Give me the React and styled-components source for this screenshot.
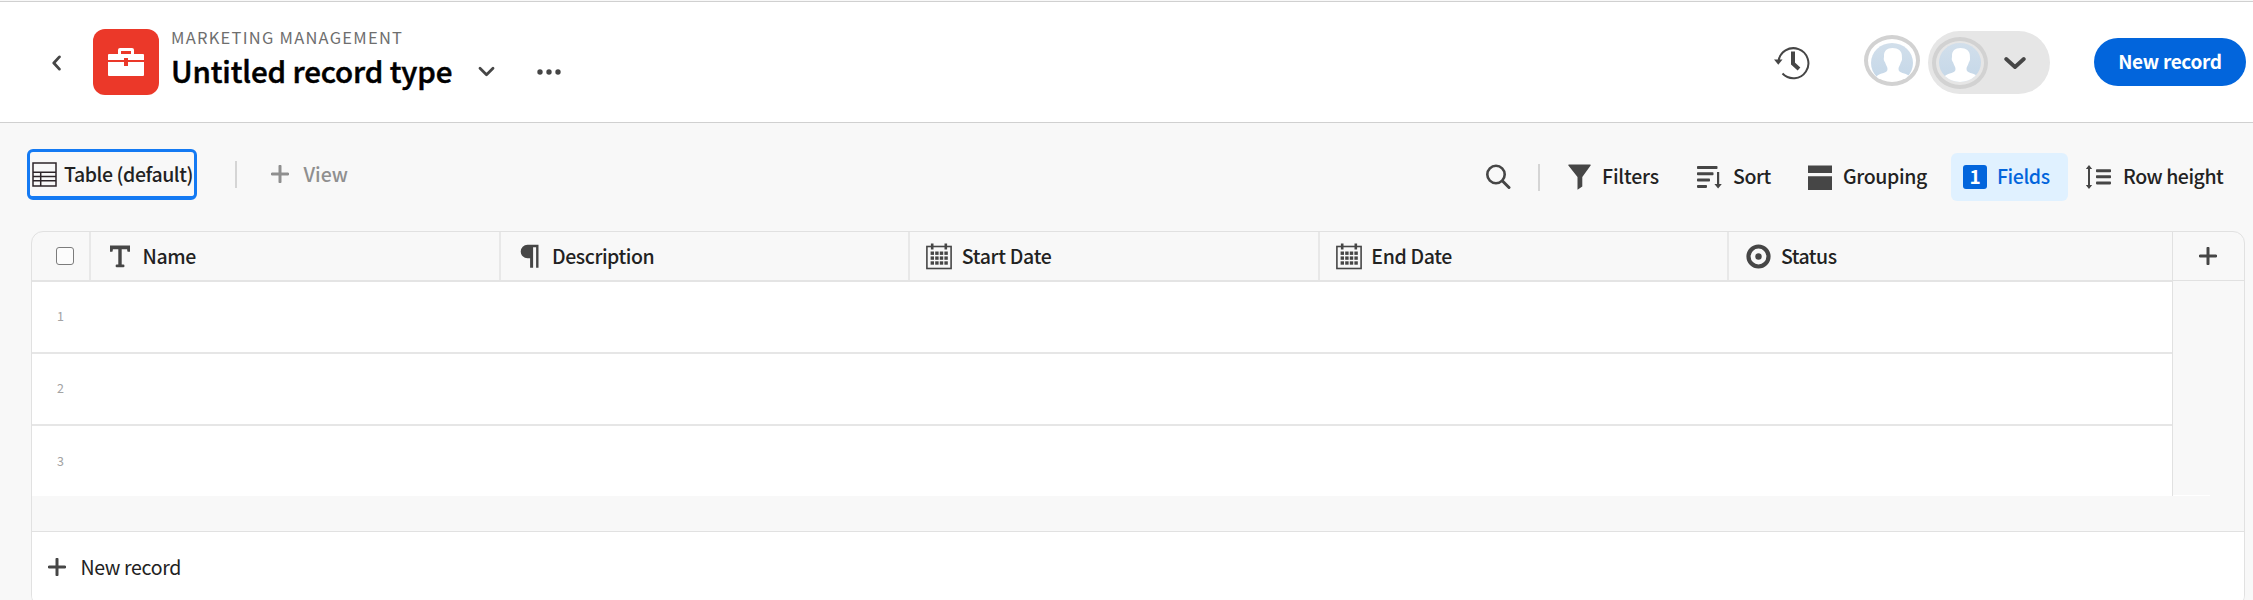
import React from "react";
import styled, { createGlobalStyle } from "styled-components";

const GlobalStyle = createGlobalStyle`
  *, *::before, *::after { box-sizing: border-box; }
  body {
    margin: 0;
    overflow: hidden;
    background: #f8f8f8;
    color: #222;
    font-family: "Noto Sans CJK SC", "Noto Sans", sans-serif;
    font-size: 19.5px;
  }
  button { font: inherit; color: inherit; background: none; border: 0; padding: 0; margin: 0; }
  svg { display: block; flex: none; }
`;

const Page = styled.div`
  width: 2253px;
  height: 600px;
  overflow: hidden;
  padding-top: 1px;
`;

const Text = styled.span`
  display: block;
  white-space: nowrap;
  font-size: ${(p) => p.$size || 19.5}px;
  line-height: ${(p) => p.$line || 24}px;
  font-weight: ${(p) => p.$weight || 500};
  letter-spacing: ${(p) => (p.$track === undefined ? -0.28 : p.$track)}px;
  color: ${(p) => p.$color || "#222"};
`;

/* Header */
const Header = styled.header`
  display: flex;
  align-items: flex-start;
  height: 122px;
  padding: 0 7px 0 51px;
  background: #fff;
  border-top: 1px solid #d0d0d0;
  border-bottom: 1px solid #d0d0d0;
`;

const BackButton = styled.button`
  margin: 53px 31px 0 0;
`;

const RecordBadge = styled.div`
  display: flex;
  align-items: center;
  justify-content: center;
  width: 66px;
  height: 66px;
  margin: 27px 12px 0 0;
  border-radius: 12px;
  background: #eb3829;
`;

const Titles = styled.div`
  display: flex;
  flex-direction: column;
  padding-top: 23px;
`;

const TitleRow = styled.div`
  display: flex;
  align-items: center;
  height: 42px;
`;

const Title = styled(Text)`
  -webkit-text-stroke: 0.5px #000;
`;

const Chevron = styled.button`
  margin: 3px 0 0 26px;
`;

const More = styled.button`
  margin: 3px 0 0 41px;
`;

const HeaderActions = styled.div`
  display: flex;
  align-items: center;
  height: 63px;
  margin: 29px 0 0 auto;
`;

const HistoryButton = styled.button`
  margin-right: 53px;
`;

const Avatar = styled.span`
  display: flex;
  flex: none;
  align-items: center;
  justify-content: center;
  width: 56px;
  height: 52px;
  border: 4px solid #d2d2d2;
  border-radius: 50%;
`;

const ViewerAvatar = styled(Avatar)`
  height: 51px;
  margin: 0 8px 4px 0;
`;

const UserPill = styled.button`
  display: flex;
  align-items: center;
  gap: 16px;
  width: 122px;
  height: 63px;
  margin-right: 44px;
  padding-left: 4px;
  border-radius: 32px;
  background: #e6e6e6;
`;

const PrimaryButton = styled.button`
  display: flex;
  align-items: center;
  justify-content: center;
  width: 152px;
  height: 48px;
  margin-bottom: 1px;
  padding-bottom: 3px;
  border-radius: 24px;
  background: #0265dc;
`;

/* Toolbar */
const Toolbar = styled.div`
  display: flex;
  align-items: flex-start;
  height: 108px;
  padding: 26px 22px 0 27px;
`;

const ViewTab = styled.button`
  display: flex;
  align-items: center;
  gap: 7px;
  width: 170px;
  height: 51px;
  padding: 0 0 0 2px;
  border: 3px solid #147af3;
  border-bottom-width: 4px;
  border-radius: 6px;
`;

const Separator = styled.span`
  flex: none;
  width: 2px;
  height: 27px;
  background: #d5d5d5;
  margin: ${(p) => p.$margin};
`;

const AddView = styled.button`
  display: flex;
  align-items: center;
  gap: 14.5px;
  height: 24px;
  margin-top: 13px;
`;

const Tools = styled.div`
  display: flex;
  align-items: center;
  height: 48px;
  margin: 4px 0 0 auto;
`;

const Tool = styled.button`
  display: flex;
  align-items: center;
  flex: none;
  gap: ${(p) => p.$gap || 11}px;
  width: ${(p) => p.$width}px;
  height: 48px;
  & > ${Text} {
    margin-bottom: 2px;
  }
`;

const ActiveTool = styled(Tool)`
  padding-left: 12px;
  margin-right: 18px;
  border-radius: 6px;
  background: #e0f1ff;
`;

const Count = styled.span`
  display: flex;
  justify-content: center;
  width: 24px;
  height: 24px;
  border-radius: 3px;
  background: #0265dc;
`;

/* Table */
const Table = styled.div`
  width: 2214px;
  height: 376px;
  margin-left: 31px;
  overflow: hidden;
  border: 1px solid #e1e1e1;
  border-radius: 12px;
`;

const TableBody = styled.div`
  display: flex;
  height: 264px;
`;

const Columns = styled.div`
  flex: 1;
`;

const HeadRow = styled.div`
  display: grid;
  grid-template-columns: 59px 409.6px 409.6px 409.6px 409.6px 1fr;
  height: 50px;
  border-bottom: 2px solid #e4e4e4;
`;

const HeadCell = styled.div`
  display: flex;
  align-items: center;
  gap: 9.5px;
  padding-left: 16px;
  border-right: ${(p) => (p.$last ? "0" : "2px solid #e8e8e8")};
`;

const IconSlot = styled.span`
  display: flex;
  justify-content: center;
  align-items: center;
  width: 26px;
  height: 26px;
`;

const CheckCell = styled(HeadCell)`
  padding-left: 24px;
`;

const Checkbox = styled.span`
  width: 18px;
  height: 18px;
  border: 1px solid #7c7c7c;
  border-radius: 3px;
  background: #fcfcfc;
`;

const Row = styled.div`
  display: flex;
  align-items: center;
  height: ${(p) => (p.$last ? 70 : 72)}px;
  padding: ${(p) => (p.$last ? "0 0 0 25px" : "0 0 2px 25px")};
  background: #fff;
  border-bottom: ${(p) => (p.$last ? "0" : "2px solid #e6e6e6")};
`;

const AddColumn = styled.div`
  width: 72px;
  border-left: 1px solid #e1e1e1;
  &::after {
    content: "";
    display: block;
    width: 37px;
    height: 1px;
    margin-top: 214px;
    background: #fff;
  }
`;

const AddColumnButton = styled.button`
  display: flex;
  align-items: center;
  justify-content: center;
  width: 100%;
  height: 49px;
  padding-right: 1px;
  border-bottom: 1px solid #e1e1e1;
`;

const Spacer = styled.div`
  height: 35px;
`;

const Footer = styled.div`
  display: flex;
  align-items: flex-start;
  gap: 14.5px;
  height: 75px;
  padding: 23px 0 0 16px;
  background: #fff;
  border-top: 1px solid #e1e1e1;
  & > svg {
    margin-top: 3px;
  }
`;

const ink = "#464646";

const Plus = ({ color = ink }) => (
  <svg width="18" height="18" viewBox="0 0 18 18" stroke={color} strokeWidth="3" strokeLinecap="round">
    <path d="M9 1.2v15.6M1.2 9h15.6" />
  </svg>
);

const Person = ({ id, tall }) => (
  <svg width="42" height={tall ? 39 : 36} viewBox={tall ? "0 0 42 39" : "0 0 42 36"}>
    <defs>
      <clipPath id={id}>
        <ellipse cx="21" cy={tall ? 19.5 : 20} rx="21" ry={tall ? 19.5 : 20} />
      </clipPath>
      <linearGradient id={id + "g"} x1="0" y1="0" x2="0" y2="1">
        <stop offset="0" stopColor="#d2dfeb" />
        <stop offset="1" stopColor="#c4d7e8" />
      </linearGradient>
    </defs>
    <g clipPath={`url(#${id})`}>
      <rect width="42" height="39" fill={`url(#${id}g)`} />
      <path
        fill="#fff"
        d="M21.5 5c-5.800 0-8.700 3.200-8.500 8 .1 1.500-.4 2.200-.2 3.600.3 1.900 1.400 2.500 1.800 4.200.5 1.900 1.900 2.800 1.900 5.200 0 2.300-1.300 3.200-4 4-3.700 1.100-6.500 2-8 4.500V41h35v-6.500c-1.500-2.500-4.300-3.400-8-4.500-2.500-.8-4-1.700-4-4 0-2.400 1.400-3.300 1.900-5.200.4-1.700 1.300-2.300 1.600-4.200.2-1.400-.2-2.100-.1-3.600.2-4.800-3.600-8-9.400-8z"
      />
    </g>
  </svg>
);

const TextIcon = () => (
  <svg width="22" height="23" viewBox="0 0 22 23" fill={ink}>
    <path d="M1 .5h20v6.200h-2.200q-.5 0-.7-2.500h-5.400v15.300h1.600q1.200 0 1.200 1.400t-1.200 1.400H7.800q-1.200 0-1.200-1.400t1.200-1.400h1.500V4.200H3.900q-.2 2.500-.7 2.500H1z" />
  </svg>
);

const ParagraphIcon = () => (
  <svg width="20" height="24" viewBox="0 0 20 24" fill={ink}>
    <path d="M7.500.7h11v23h-2.400V3.200h-3v20.500h-3V14.300H7.500A6.800 6.800 0 0 1 7.500.7z" />
  </svg>
);

const CalendarIcon = () => (
  <svg width="26" height="28" viewBox="0 0 26 28">
    <rect x=".9" y="4.500" width="24.200" height="22" fill="none" stroke={ink} strokeWidth="1.6" />
    <path d="M6.200 1.500v6M19.800 1.500v6" stroke={ink} strokeWidth="2.600" />
    {[0, 1, 2].map((r) =>
      [0, 1, 2, 3].map((c) => (
        <rect key={`${r}-${c}`} x={4.6 + c * 4.6} y={9.5 + r * 4.900} width="3.400" height="3.400" fill={ink} />
      ))
    )}
  </svg>
);

const StatusIcon = () => (
  <svg width="25" height="25" viewBox="0 0 25 25">
    <circle cx="12.500" cy="12.500" r="10" fill="none" stroke={ink} strokeWidth="4.200" />
    <circle cx="12.500" cy="12.500" r="3.200" fill={ink} />
  </svg>
);

const fields = [
  { name: "Name", Icon: TextIcon, track: -0.4 },
  { name: "Description", Icon: ParagraphIcon, track: -0.45 },
  { name: "Start Date", Icon: CalendarIcon, track: -0.3 },
  { name: "End Date", Icon: CalendarIcon, track: -0.35 },
  { name: "Status", Icon: StatusIcon, track: -0.5 },
];

export default function App() {
  return (
    <Page>
      <GlobalStyle />
      <Header>
        <BackButton aria-label="Back">
          <svg width="11" height="16" viewBox="0 0 11 16" fill="none" stroke={ink} strokeWidth="2.800" strokeLinecap="round" strokeLinejoin="round">
            <path d="M8.400 1.900 2.800 8l5.600 6.100" />
          </svg>
        </BackButton>
        <RecordBadge>
          <svg width="36" height="28" viewBox="0 0 36 28" fill="#fff">
            <path d="M10 6V2q0-2 2-2h12q2 0 2 2v4h9q1 0 1 1v5H20v-2h-4v2H0V7q0-1 1-1zm3 0h10V3H13z" fillRule="evenodd" />
            <path d="M0 14h16v4h4v-4h16v13q0 1-1 1H1q-1 0-1-1z" />
          </svg>
        </RecordBadge>
        <Titles>
          <Text $size={16.5} $weight={400} $track={1.25} $color="#6e6e6e">MARKETING MANAGEMENT</Text>
          <TitleRow>
            <Title $size={29.5} $line={42} $weight={500} $track={-0.12} $color="#000">Untitled record type</Title>
            <Chevron aria-label="Open menu">
              <svg width="17" height="11" viewBox="0 0 17 11" fill="none" stroke={ink} strokeWidth="2.800" strokeLinecap="round" strokeLinejoin="round">
                <path d="M2 2.200 8.500 8.700 15 2.200" />
              </svg>
            </Chevron>
            <More aria-label="More">
              <svg width="26" height="8" viewBox="0 0 26 8" fill={ink}>
                <circle cx="4" cy="4" r="2.700" />
                <circle cx="13" cy="4" r="2.700" />
                <circle cx="22" cy="4" r="2.700" />
              </svg>
            </More>
          </TitleRow>
        </Titles>
        <HeaderActions>
          <HistoryButton aria-label="History">
            <svg width="38" height="34" viewBox="0 0 38 34" fill="none" stroke={ink}>
              <path d="M5.500 15.500A15 15 0 1 1 9.500 27.500" strokeWidth="2" />
              <path d="M1 13.500h8.500L5.300 18.700z" fill={ink} stroke="none" />
              <path d="M20 5.500v12l6 5.500" strokeWidth="4" />
            </svg>
          </HistoryButton>
          <ViewerAvatar><Person id="viewer" /></ViewerAvatar>
          <UserPill>
            <Avatar><Person id="user" tall /></Avatar>
            <svg width="22" height="14" viewBox="0 0 22 14" fill="none" stroke={ink} strokeWidth="3.800" strokeLinecap="round" strokeLinejoin="round">
              <path d="M2.200 3 11 11l8.800-8" />
            </svg>
          </UserPill>
          <PrimaryButton><Text $size={19} $weight={700} $track={-0.3} $color="#fff">New record</Text></PrimaryButton>
        </HeaderActions>
      </Header>

      <Toolbar>
        <ViewTab>
          <svg width="25" height="25" viewBox="0 0 25 25" fill="none" stroke="#2c2428" strokeWidth="1.500">
            <rect x="1" y="1" width="23" height="23" />
            <path d="M1 10.200h23M1 14.500h23M1 18.700h23M8.700 10.200V24" />
          </svg>
          <Text $track={-0.42}>Table (default)</Text>
        </ViewTab>
        <Separator $margin="12px 34px 0 38px" />
        <AddView>
          <Plus color="#8f8f8f" />
          <Text $track={0} $color="#8f8f8f">View</Text>
        </AddView>
        <Tools>
          <Tool $width={52} aria-label="Search">
            <svg width="25" height="26" viewBox="0 0 25 26" fill="none" stroke={ink} strokeWidth="2.600" strokeLinecap="round">
              <circle cx="10" cy="10.500" r="8.700" />
              <path d="M16.500 17l6.500 6.500" strokeWidth="3" />
            </svg>
          </Tool>
          <Separator $margin="0 28px 0 0" />
          <Tool $width={129}>
            <svg width="23" height="26" viewBox="0 0 23 26" fill={ink}>
              <path d="M.8.500h21.400q1 0 .4 1L14.300 13v9.500L9.500 25.800V13L.4 1.500Q-.1.500.8.500z" />
            </svg>
            <Text $track={-0.16}>Filters</Text>
          </Tool>
          <Tool $width={111}>
            <svg width="25" height="24" viewBox="0 0 25 24" fill={ink}>
              <rect y="1" width="20.500" height="3" rx=".8" />
              <rect y="7.300" width="16.500" height="3" rx=".8" />
              <rect y="13.600" width="13" height="3" rx=".8" />
              <rect y="19.900" width="10" height="3" rx=".8" />
              <path d="M20 7h2.200v12h2.600l-3.700 4.500-3.700-4.500H20z" />
            </svg>
            <Text $track={-0.4}>Sort</Text>
          </Tool>
          <Tool $width={143}>
            <svg width="24" height="25" viewBox="0 0 24 25" fill={ink}>
              <path d="M0 .5h24v7.500H0zM0 11.200h24V25H0z" />
            </svg>
            <Text $track={-0.38}>Grouping</Text>
          </Tool>
          <ActiveTool $width={117} $gap={10}>
            <Count><Text $size={19} $weight={700} $line={22} $color="#fff">1</Text></Count>
            <Text $track={-0.42} $color="#0265dc">Fields</Text>
          </ActiveTool>
          <Tool $width={145} $gap={12}>
            <svg width="25" height="24" viewBox="0 0 25 24" fill={ink}>
              <path d="M3 0l3.200 4H4v16h2.200L3 24l-3.200-4H2V4H-.2z" />
              <rect x="10" y="4.200" width="15" height="3" rx=".8" />
              <rect x="10" y="10.300" width="15" height="3" rx=".8" />
              <rect x="10" y="16.400" width="15" height="3" rx=".8" />
            </svg>
            <Text $track={-0.45}>Row height</Text>
          </Tool>
        </Tools>
      </Toolbar>

      <Table>
        <TableBody>
          <Columns>
            <HeadRow>
              <CheckCell><Checkbox /></CheckCell>
              {fields.map(({ name, Icon, track }, i) => (
                <HeadCell key={name} $last={i === fields.length - 1}>
                  <IconSlot><Icon /></IconSlot>
                  <Text $track={track}>{name}</Text>
                </HeadCell>
              ))}
            </HeadRow>
            {[1, 2, 3].map((n) => (
              <Row key={n} $last={n === 3}>
                <Text $size={12.5} $weight={400} $track={0} $color="#a3a3a3">{n}</Text>
              </Row>
            ))}
          </Columns>
          <AddColumn>
            <AddColumnButton aria-label="Add field"><Plus /></AddColumnButton>
          </AddColumn>
        </TableBody>
        <Spacer />
        <Footer>
          <Plus />
          <Text $weight={400} $track={-0.35}>New record</Text>
        </Footer>
      </Table>
    </Page>
  );
}
